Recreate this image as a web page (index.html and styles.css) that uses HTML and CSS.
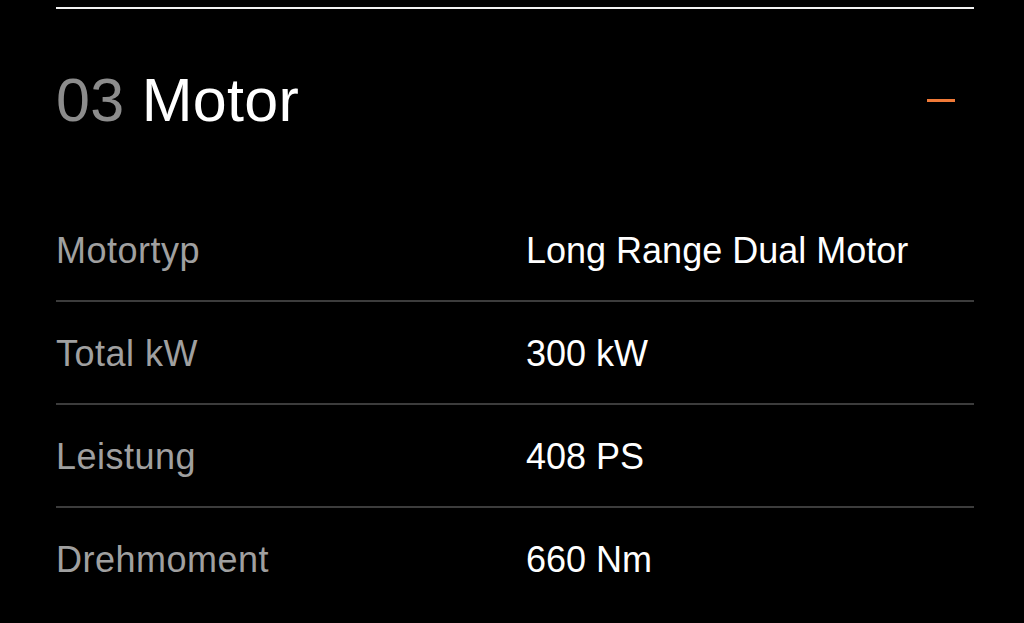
FILE: index.html
```html
<!DOCTYPE html>
<html lang="de">
<head>
<meta charset="utf-8">
<title>03 Motor</title>
<link rel="stylesheet" href="styles.css">
</head>
<body>
<section class="spec">
  <header class="spec-head">
    <h2 class="spec-title"><span class="spec-num">03</span> Motor</h2>
    <button class="spec-toggle" aria-label="Zuklappen"><span class="minus"></span></button>
  </header>
  <dl class="spec-list">
    <div class="spec-row"><dt>Motortyp</dt><dd>Long Range Dual Motor</dd></div>
    <div class="spec-row"><dt>Total kW</dt><dd>300 kW</dd></div>
    <div class="spec-row"><dt>Leistung</dt><dd>408 PS</dd></div>
    <div class="spec-row"><dt>Drehmoment</dt><dd>660 Nm</dd></div>
  </dl>
</section>
</body>
</html>
```
FILE: styles.css
```css
html, body {
  margin: 0;
  background: #000;
}
body {
  font-family: "Liberation Sans", Arial, sans-serif;
  color: #fff;
}
.spec {
  margin: 7px 50px 0 56px;
  border-top: 2px solid #f2f2f2;
}
.spec-head {
  display: flex;
  justify-content: space-between;
  align-items: center;
  padding: 61px 19px 69px 0;
}
.spec-title {
  margin: 0;
  font-size: 61px;
  line-height: 60px;
  font-weight: 400;
  color: #fff;
  letter-spacing: 0.3px;
}
.spec-num {
  color: #8c8c8c;
}
.spec-toggle {
  background: none;
  border: 0;
  padding: 0;
  width: 28px;
  height: 4px;
  display: flex;
  align-items: center;
}
.minus {
  display: block;
  width: 28px;
  height: 3px;
  background: #f07a38;
}
.spec-list {
  margin: 0;
}
.spec-row {
  display: grid;
  grid-template-columns: 470px 1fr;
  padding: 32px 0 29px;
  border-bottom: 2px solid #3c3c3c;
  font-size: 36px;
  line-height: 40px;
}
.spec-row:last-child {
  border-bottom: 0;
}
.spec-row dt {
  color: #a0a0a0;
  letter-spacing: 0.5px;
}
.spec-row dd {
  margin: 0;
  color: #fff;
}
```
